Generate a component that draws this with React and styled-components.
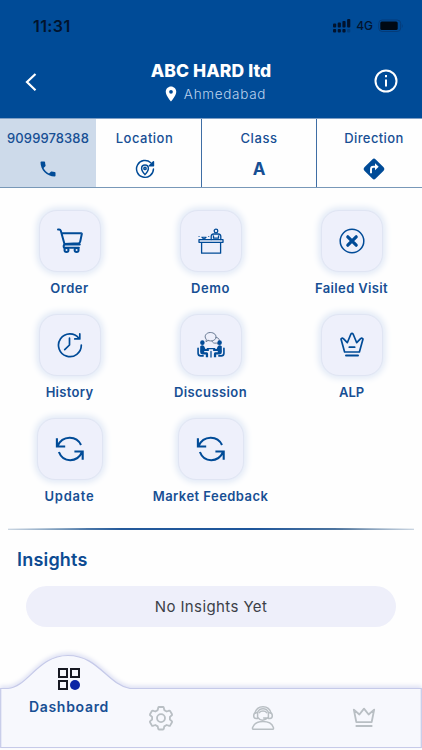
import React from 'react'
import styled, { createGlobalStyle } from 'styled-components'
import { MdLocationOn, MdPhone } from 'react-icons/md'

const colors = {
  primary: '#004b97',
  text: '#174f94',
  tile: '#eef0fb',
  muted: '#b9bfc4',
}

const GlobalStyle = createGlobalStyle`
  * {
    box-sizing: border-box;
  }
  body {
    margin: 0;
    background: #fefefe;
    font-family: Inter, 'Liberation Sans', sans-serif;
  }
  svg {
    display: block;
    flex: none;
  }
`

const Screen = styled.div`
  width: 422px;
  height: 750px;
  display: flex;
  flex-direction: column;
  overflow: hidden;
  background: #fefefe;
`

const Text = styled.span`
  display: block;
  white-space: nowrap;
  color: ${(props) => props.$color || colors.text};
  font-size: ${(props) => props.$size || 13}px;
  font-weight: ${(props) => props.$weight || 600};
  line-height: ${(props) => props.$line || 20}px;
  letter-spacing: ${(props) => props.$spacing || 0}px;
`

const Header = styled.header`
  height: 118px;
  background: ${colors.primary};
`

const StatusBar = styled.div`
  height: 52px;
  padding: 0 18px 0 33px;
  display: flex;
  align-items: center;
  justify-content: space-between;
`

const StatusIcons = styled.div`
  display: flex;
  align-items: center;
  gap: 5px;
`

const TitleBar = styled.div`
  padding: 6px 23px 0 25px;
  display: flex;
  align-items: flex-start;
  justify-content: space-between;
`

const TitleIcon = styled.div`
  width: 25px;
  padding-top: 11px;
`

const Title = styled.div`
  display: flex;
  flex-direction: column;
  align-items: center;
  padding-right: 2px;
`

const Place = styled.div`
  display: flex;
  align-items: center;
  gap: 4px;
  padding-left: 6px;
  margin-top: 1px;
`

const Tabs = styled.div`
  height: 70px;
  display: grid;
  grid-template-columns: 96px 106px 115px 105px;
  border-top: 1px solid #7f9fc5;
  border-bottom: 1.5px solid #7898b8;
`

const Tab = styled.div`
  display: flex;
  flex-direction: column;
  align-items: center;
  padding-top: 9px;
  padding-left: ${(props) => props.$left || 0}px;
  padding-right: ${(props) => props.$right || 0}px;
  background: ${(props) => (props.$active ? '#cddaea' : '#fefefe')};
  border-right: ${(props) => (props.$line ? '1px solid #3f6ea5' : 'none')};
`

const TabIcon = styled.div`
  height: 24px;
  margin-top: 9px;
  display: flex;
  align-items: center;
`

const Actions = styled.div`
  height: 340px;
  padding-top: 22px;
  display: grid;
  grid-template-columns: repeat(3, 141px);
  grid-auto-rows: 104px;
  margin-left: -1px;
`

const Action = styled.div`
  display: flex;
  flex-direction: column;
  align-items: center;
`

const Tile = styled.div`
  width: ${(props) => (props.$wide ? 66 : 62)}px;
  height: 62px;
  margin-bottom: 6px;
  display: flex;
  align-items: center;
  justify-content: center;
  background: ${colors.tile};
  border: 1px solid #e0e5f3;
  border-radius: 18px;
  box-shadow: 0 0 7px 2px #dde6f5;
`

const Divider = styled.div`
  height: 2px;
  margin: 0 8px;
  background: linear-gradient(90deg, #b9c8d8, #6f92b5 12%, #24599a 28%, #1d559b 60%, #55799f 84%, #b9c8d8);
  clip-path: polygon(0 40%, 20% 0, 80% 0, 100% 40%, 100% 90%, 80% 100%, 20% 100%, 0 90%);
`

const Insights = styled.section`
  padding: 16px 26px 0 17px;
`

const Empty = styled.div`
  height: 41px;
  margin: 13px 0 0 9px;
  display: flex;
  align-items: center;
  justify-content: center;
  border-radius: 21px;
  background: #eeeffa;
`

const Nav = styled.nav`
  position: relative;
  height: 104px;
  margin-top: auto;
  display: grid;
  grid-template-columns: 138px 46px 158px 44px;
`

const NavShape = styled.svg`
  position: absolute;
  top: 0;
  left: 0;
  filter: drop-shadow(0 -2px 2px #dcdff3);
`

const NavItem = styled.div`
  position: relative;
  display: flex;
  flex-direction: column;
  align-items: center;
  gap: 5px;
  padding-top: ${(props) => (props.$active ? 21 : 59)}px;
`

const Line = ({ size = 26, width = 1.5, color = colors.primary, children }) => (
  <svg
    width={size}
    height={size}
    viewBox="0 0 26 26"
    fill="none"
    stroke={color}
    strokeWidth={width}
    strokeLinecap="round"
    strokeLinejoin="round"
  >
    {children}
  </svg>
)

const Signal = () => (
  <svg width="18" height="14" viewBox="0 0 18 14" fill="#02132d">
    <rect x="0" y="4.5" width="3.2" height="4" rx="1" />
    <rect x="4.7" y="3.5" width="3.2" height="5" rx="1" />
    <rect x="9.4" y="2" width="3.2" height="6.5" rx="1" />
    <rect x="14.1" y="0" width="3.2" height="8.5" rx="1" />
    <rect x="0" y="10" width="3.2" height="3.5" rx="1" />
    <rect x="4.7" y="10" width="3.2" height="3.5" rx="1" />
    <rect x="9.4" y="10" width="3.2" height="3.5" rx="1" />
    <rect x="14.1" y="10" width="3.2" height="3.5" rx="1" opacity="0.25" />
  </svg>
)

const Battery = () => (
  <svg width="26" height="14" viewBox="0 0 26 14">
    <rect x="0.7" y="1" width="22" height="11.5" rx="3.5" fill="none" stroke="#053b78" />
    <rect x="2.3" y="2.6" width="17.4" height="8.4" rx="1.5" fill="#000914" />
    <path d="M24.2 5v4q1.5-2 0-4" fill="#053b78" />
  </svg>
)

const Cart = () => (
  <Line width={2}>
    <path d="M1 1.5h1.2q1.2 0 1.6 1.2L7.6 16.5h15.2M4.7 5.3h19.6q.6 0 .5.7l-1.6 7.6q-.3 1.5-1.7 1.7L7.3 16" />
    <path d="M7.6 16.5q-1.6 1-.5 3.3h14.8" />
    <circle cx="9.5" cy="22" r="2" />
    <circle cx="19.6" cy="22" r="2" />
  </Line>
)

const Desk = () => (
  <Line width={1.3}>
    <path d="M1 11.7h24v2.6H1zM3.6 14.4v10.8h19V14.4" />
    <circle cx="18" cy="3" r="1.8" />
    <path d="M13.2 11.5V8.2q.3-2.2 2.4-2.2h4.8q2 0 2.4 2.2v3.3M15.5 8v2.2h5V8" />
    <path d="M3.8 9.2h4.4L6 11.4zM1 8.5h.1M10.7 8.5h.1" strokeWidth="1.1" />
  </Line>
)

const Failed = () => (
  <Line>
    <circle cx="13" cy="13" r="11.8" />
    <path d="m8.8 8.8 8.4 8.4m0-8.4-8.4 8.4" strokeWidth="3.2" />
  </Line>
)

const History = () => (
  <Line width={1.7}>
    <path d="M24.3 13A11.4 11.4 0 1 1 22 6.4M22.8 1.9v5h-5" />
    <path d="M12.5 6.2V13l-4.8 4.6" />
  </Line>
)

const Discussion = () => (
  <Line size={28} width={0.9}>
    <path
      d="M10.2 8.8 8.4 10l.2-2.3C6 4.8 8.7 1.4 12.3 1.4s6.1 2.4 5.2 5.2c-.8 2.3-4.2 3.3-7.3 2.2M17.6 6c3.2.1 4.1 3.2 2 4.5l.1 1.8-1.7-1.1c-2.2.5-3.7-.4-4.2-1.9"
      stroke="#63768f"
    />
    <g fill={colors.primary} stroke="none">
      <circle cx="5" cy="10.8" r="2.1" />
      <circle cx="21" cy="10.8" r="2.1" />
      <path d="M3 14.2q2.1-2 3.8.2l1 2.4H11v1.7H6.7v1.3h2.4q1.2.2 1.2 1.5v3H8.2v-2.4H5q-2.1-.2-2.1-2.4zM23 14.2q-2.1-2-3.8.2l-1 2.4H15v1.7h4.3v1.3h-2.4q-1.2.2-1.2 1.5v3h2.1v-2.4H21q2.1-.2 2.1-2.4z" />
    </g>
    <g stroke={colors.primary}>
      <path d="M1 16v4.8q.2 2.3 2.5 2.3h2.2M25 16v4.8q-.2 2.3-2.5 2.3h-2.2" strokeWidth="1.5" />
      <path d="M9.5 16.3h7M13 19v5.2" strokeWidth="1.2" />
    </g>
  </Line>
)

const TileCrown = () => (
  <Line width={1.7}>
    <path d="M5.6 20h14.8L24 7q-1.2-1.7-2.4-.3l-3.9 4L14.2 2.2q-1.2-1.7-2.4 0l-3.5 8.5-3.9-4Q3.2 5.3 2 7zM10.3 15.2h5.4" />
    <path d="M7 23.6h12" strokeWidth="2" />
  </Line>
)

const Refresh = () => (
  <svg width="30" height="26" viewBox="0 0 30 26" fill="none" stroke={colors.primary} strokeWidth="2.1">
    <path d="M1.9 2.3v8.2h8.3M2.5 10C7.5-1 21.6-.8 26 9M27.7 23.7v-8.2h-8.3M27.1 16C22.1 27 8 26.8 3.9 16" />
  </svg>
)

const LocationPin = () => (
  <Line size={20} width={1.9}>
    <path d="M20.5 4.8A11 11 0 1 0 24 13" />
    <path d="M24 3.5v5.3h-5.3z" fill={colors.primary} />
    <path d="M13 20.3q-4.4-5-4.4-8a4.4 4.4 0 0 1 8.8 0q0 3-4.4 8z" />
    <circle cx="13" cy="12.2" r="1.5" />
  </Line>
)

const DirectionSign = () => (
  <svg width="24" height="24" viewBox="0 0 24 24" fill="none">
    <rect x="4" y="4" width="16" height="16" rx="2.4" transform="rotate(45 12 12)" fill={colors.primary} />
    <path d="M9 16.3v-4.1q0-2.4 2.4-2.4h3.3" stroke="#fff" strokeWidth="1.9" />
    <path d="M13 6.2 16.7 9.8 13 13.2z" fill="#fff" />
  </svg>
)

const DashboardIcon = () => (
  <svg width="24" height="24" viewBox="0 0 24 24" fill="none" stroke="#171922" strokeWidth="2">
    <path d="M2 2h8v8H2zM14 2h8v8h-8zM2 14h8v8H2z" />
    <circle cx="18" cy="18" r="5" fill="#0a24a5" stroke="none" />
  </svg>
)

const Gear = () => (
  <Line size={26} width={1.8} color={colors.muted}>
    <path d="M11 2h4q.6 0 .8.7l.5 2.4 2.4 1.4 2.5-.8q.6-.1 1 .4l1.8 3.2q.3.6-.2 1l-1.9 1.6v2.6l1.9 1.7q.5.5.2 1l-1.8 3.2q-.4.6-1 .4l-2.5-.8-2.4 1.4-.5 2.4q-.2.7-.8.7h-4q-.6 0-.8-.7l-.5-2.4-2.4-1.4-2.5.8q-.6.2-1-.4L2 17.200q-.3-.5.2-1l1.900-1.700v-2.600L2.200 10.300q-.5-.4-.2-1l1.800-3.200q.4-.5 1-.4l2.500.8 2.400-1.400.5-2.400q.2-.7.8-.7z" />
    <circle cx="13" cy="13.100" r="4" />
  </Line>
)

const Support = () => (
  <Line size={26} width={1.5} color={colors.muted}>
    <path d="M5 8.200C7-.3 19-.3 21 8.200M7.500 7.500a5.900 5.900 0 0 1 11 0" />
    <path d="M7.600 7.800v5.800H6.100q-2.400-.3-2.400-2.900t2.400-2.900zM18.400 7.800v5.800h1.500q2.400-.3 2.400-2.900t-2.400-2.900z" />
    <path d="M8 12.700q4 5 10 0M9.300 7.700q1-1.700 3.700-1.700t3.700 1.700M13.600 12.900h3" />
    <path d="M3.200 24.300q-1-.2-.6-1.800C4 18.700 8 16.600 13 16.600s9 2.100 10.400 5.900q.4 1.600-.6 1.800z" />
  </Line>
)

const NavCrown = () => (
  <Line size={24} width={2} color={colors.muted}>
    <path d="M4.700 18.500h16.600L24 5l-6 5.300L13 4l-5 6.300L2 5zM4.700 22.800h16.600" />
  </Line>
)

const actions = [
  { label: 'Order', icon: <Cart />, spacing: 0.5 },
  { label: 'Demo', icon: <Desk />, spacing: 0.6 },
  { label: 'Failed Visit', icon: <Failed />, spacing: 0.35 },
  { label: 'History', icon: <History />, spacing: 0.3 },
  { label: 'Discussion', icon: <Discussion />, spacing: 0.4 },
  { label: 'ALP', icon: <TileCrown />, spacing: -0.1 },
  { label: 'Update', icon: <Refresh />, spacing: 0.8, wide: true },
  { label: 'Market Feedback', icon: <Refresh />, spacing: 0.45, wide: true },
]

const App = () => {
  return (
    <>
      <GlobalStyle />
      <Screen>
        <Header>
          <StatusBar>
            <Text $size={16} $color="#02132d" $spacing={0.4}>11:31</Text>
            <StatusIcons>
              <Signal />
              <Text $size={12} $weight={500} $color="#02132d">4G</Text>
              <Battery />
            </StatusIcons>
          </StatusBar>
          <TitleBar>
            <TitleIcon>
              <svg width="12" height="25" viewBox="0 0 12 25" fill="none" stroke="#fff" strokeWidth="2.2">
                <path d="m10.500 5-8.500 8 8.500 8.200" />
              </svg>
            </TitleIcon>
            <Title>
              <Text $size={17.5} $weight={800} $line={25} $color="#fff" $spacing={0.1}>ABC HARD ltd</Text>
              <Place>
                <MdLocationOn size={18} color="#fff" />
                <Text $size={13.5} $weight={300} $color="#bdd3ee" $spacing={0.7}>Ahmedabad</Text>
              </Place>
            </Title>
            <TitleIcon>
              <svg width="24" height="24" viewBox="0 0 24 24" fill="none" stroke="#fff" strokeWidth="2">
                <circle cx="12" cy="12" r="10.500" />
                <path d="M12 10.500v7M12 6v2.300" />
              </svg>
            </TitleIcon>
          </TitleBar>
        </Header>
        <Tabs>
          <Tab $active>
            <Text $weight={500} $spacing={0.1}>9099978388</Text>
            <TabIcon><MdPhone size={20} color={colors.primary} /></TabIcon>
          </Tab>
          <Tab $line $right={8}>
            <Text $weight={500} $spacing={0.5}>Location</Text>
            <TabIcon><LocationPin /></TabIcon>
          </Tab>
          <Tab $line>
            <Text $weight={500} $spacing={0.6}>Class</Text>
            <TabIcon><Text $size={17} $weight={700}>A</Text></TabIcon>
          </Tab>
          <Tab $left={9}>
            <Text $weight={500} $spacing={0.4}>Direction</Text>
            <TabIcon><DirectionSign /></TabIcon>
          </Tab>
        </Tabs>
        <Actions>
          {actions.map((action) => (
            <Action key={action.label}>
              <Tile $wide={action.wide}>{action.icon}</Tile>
              <Text $spacing={action.spacing}>{action.label}</Text>
            </Action>
          ))}
        </Actions>
        <Divider />
        <Insights>
          <Text $size={18} $line={27} $color="#0c4b92" $spacing={0.2}>Insights</Text>
          <Empty>
            <Text $size={15} $weight={400} $color="#3c3f48" $spacing={0.4}>No Insights Yet</Text>
          </Empty>
        </Insights>
        <Nav>
          <NavShape width="422" height="104" viewBox="0 0 422 104">
            <path
              d="M.7 42.500H8C28 41 38 9.500 68 9.500S107 38 130 42.500h291.300v59H.7z"
              fill="#f7f8fd"
              stroke="#c6cae9"
              strokeWidth="1.200"
            />
          </NavShape>
          <NavItem $active>
            <DashboardIcon />
            <Text $size={14} $line={22} $spacing={0.7}>Dashboard</Text>
          </NavItem>
          <NavItem><Gear /></NavItem>
          <NavItem><Support /></NavItem>
          <NavItem><NavCrown /></NavItem>
        </Nav>
      </Screen>
    </>
  )
}

export default App
